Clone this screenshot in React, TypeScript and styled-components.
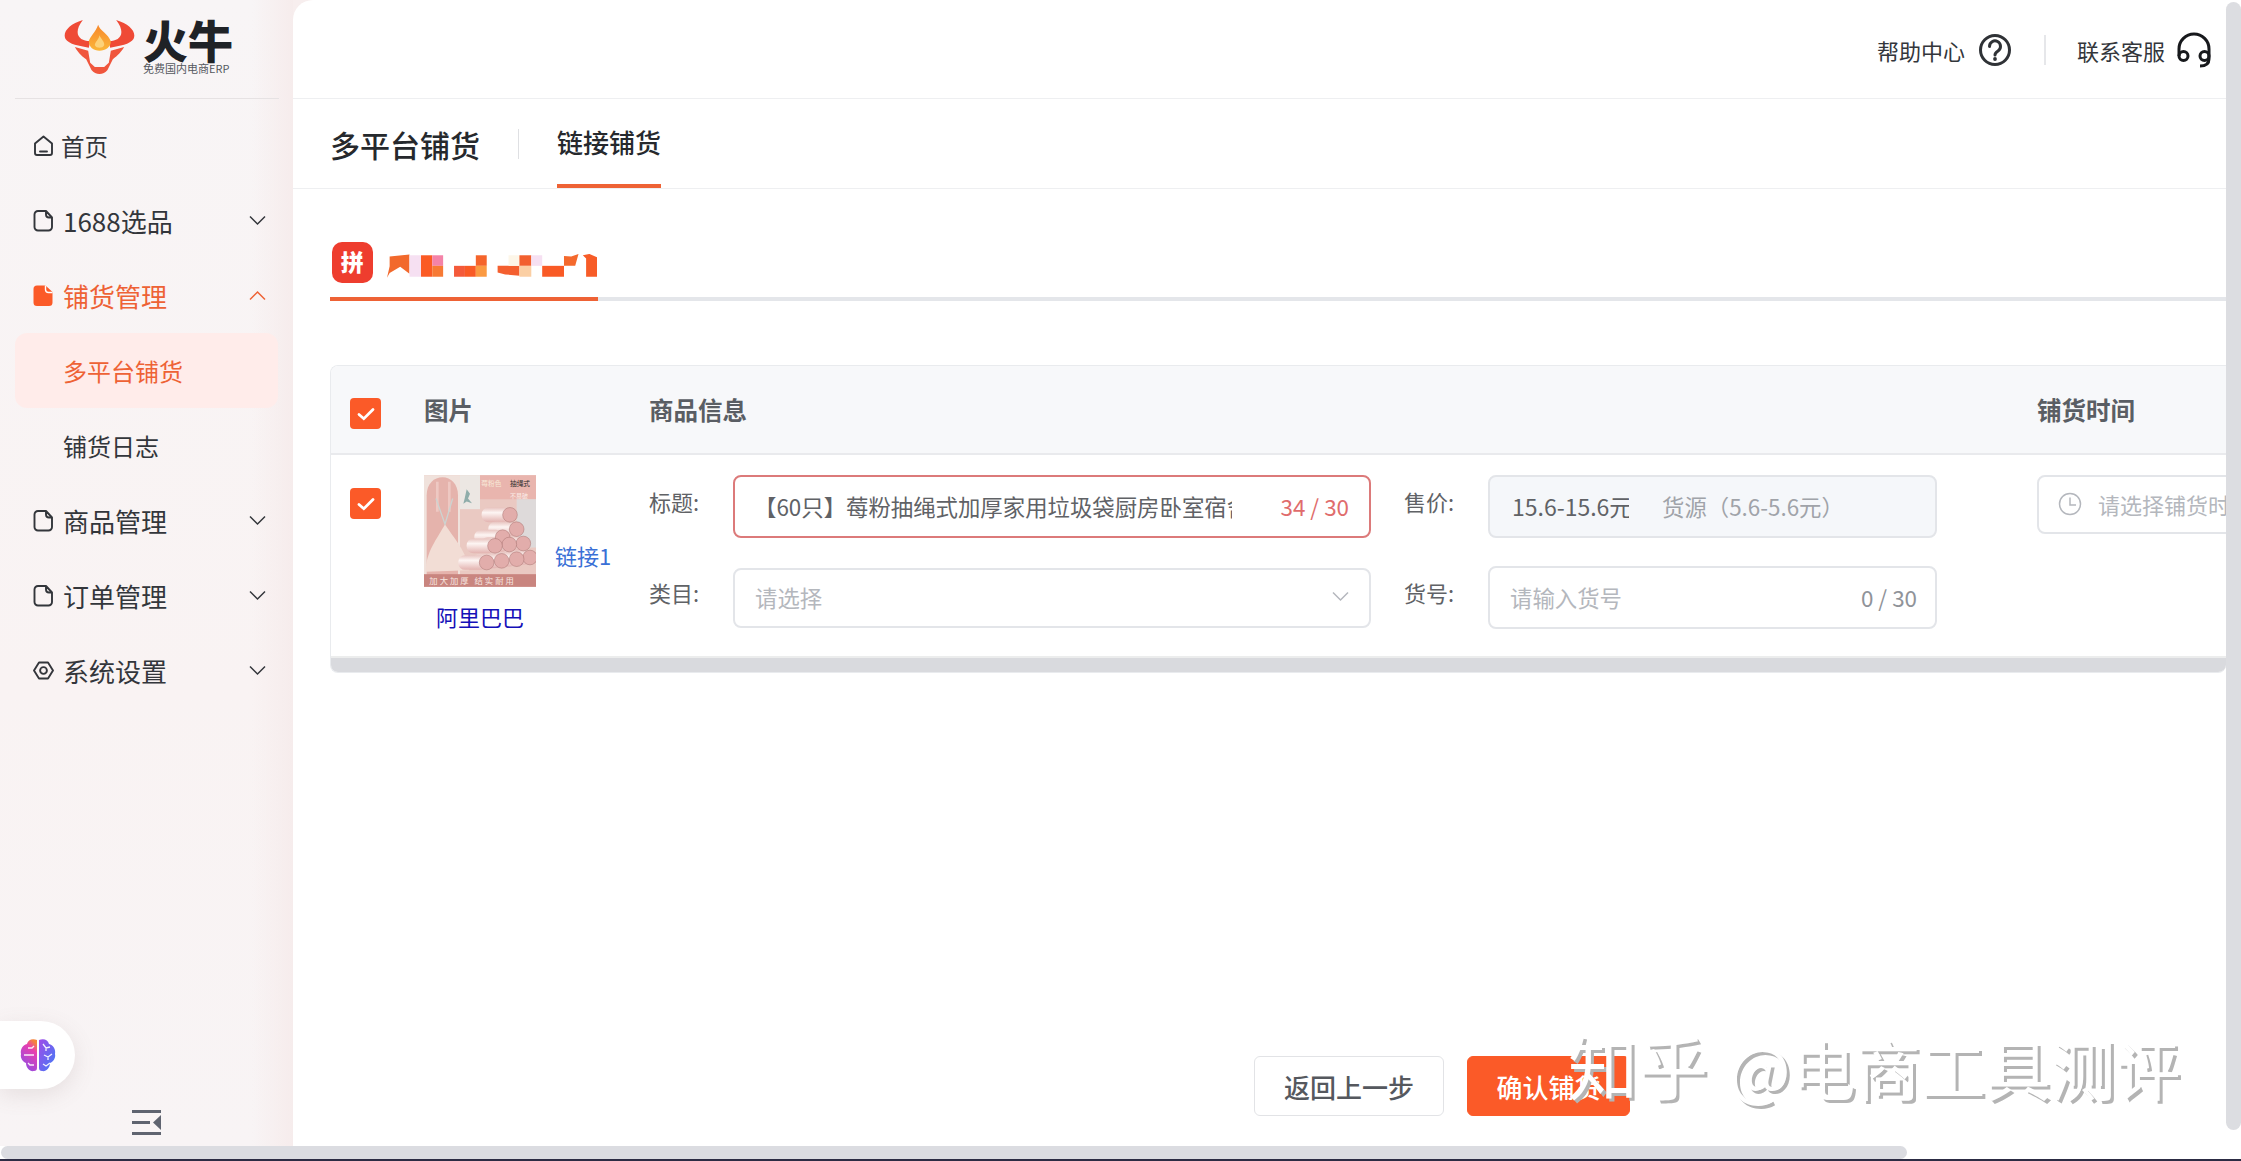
import React from "react"
import styled, { createGlobalStyle } from "styled-components"

const GlobalStyle = createGlobalStyle`
  html, body {
    margin: 0;
    height: 100%;
    overflow: hidden;
    background: #fff;
  }
  body, input {
    font-family: "Noto Sans CJK SC", "Noto Sans", sans-serif;
  }
  #root {
    height: 100%;
  }
`

const Page = styled.div`
  height: 1161px;
  width: 2241px;
  display: flex;
  flex-direction: column;
  position: relative;
  overflow: hidden;
`

const Body = styled.div`
  height: 1146px;
  display: flex;
  background: #f7eeee;
`

const Sidebar = styled.aside`
  width: 293px;
  flex: none;
  display: flex;
  flex-direction: column;
  background:
    linear-gradient(90deg, rgba(246, 236, 236, 0) 86%, #f6ecec 100%),
    linear-gradient(180deg, #f8f5f6 0%, #f9f3f3 60%, #f8f4f5 100%);
`

const Brand = styled.div`
  height: 99px;
  box-sizing: border-box;
  margin: 0 14px 0 15px;
  border-bottom: 1px solid #e6e2e3;
  display: flex;
  align-items: flex-start;
  padding: 19px 0 0 49px;
  gap: 8px;
`

const BrandText = styled.div`
  display: flex;
  flex-direction: column;
  color: #1f2226;
`

const BrandName = styled.div`
  font-size: 45px;
  font-weight: 900;
  line-height: 41px;
  white-space: nowrap;
`

const BrandSlogan = styled.div`
  font-size: 11px;
  line-height: 14px;
  margin-top: 1px;
  color: #54585e;
  white-space: nowrap;
`

const Nav = styled.nav`
  display: flex;
  flex-direction: column;
  padding-top: 9px;
`

const NavItem = styled.div<{ $active?: boolean }>`
  height: 75px;
  display: flex;
  align-items: center;
  padding: 0 27px 0 33px;
  color: ${(p) => (p.$active ? "#ee6235" : "#33363b")};
`

const NavIcon = styled.svg`
  width: 21px;
  height: 23px;
  flex: none;
  margin-right: 9px;
`

const NavLabel = styled.span<{ $small?: boolean }>`
  font-size: ${(p) => (p.$small ? "23.5px" : "26px")};
  line-height: 32px;
  flex: 1;
  white-space: nowrap;
  margin-left: ${(p) => (p.$small ? "-2px" : "0")};
`

const Chevron = styled.svg`
  width: 17px;
  height: 11px;
  flex: none;
`

const SubItem = styled.div<{ $active?: boolean }>`
  height: 75px;
  margin: 0 15px;
  padding-left: 48px;
  display: flex;
  align-items: center;
  font-size: 24px;
  border-radius: 12px;
  color: ${(p) => (p.$active ? "#ee6235" : "#33363b")};
  background: ${(p) => (p.$active ? "#ffecea" : "transparent")};
`

const BrainPill = styled.div`
  margin-top: auto;
  width: 75px;
  height: 68px;
  display: flex;
  align-items: center;
  justify-content: flex-end;
  padding-right: 19px;
  box-sizing: border-box;
  background: #fff;
  border-radius: 0 34px 34px 0;
  box-shadow: 0 6px 22px rgba(120, 100, 100, 0.14);
`

const Collapse = styled.svg`
  width: 30px;
  height: 25px;
  margin: 21px 0 11px 132px;
  flex: none;
`

const Main = styled.main`
  flex: 1;
  min-width: 0;
  display: flex;
  flex-direction: column;
  background: #fff;
  border-radius: 20px 0 0 0;
  overflow: hidden;
`

const TopBar = styled.header`
  height: 97px;
  flex: none;
  padding: 1px 14px 0 0;
  border-bottom: 1px solid #eeeff1;
  display: flex;
  align-items: center;
  justify-content: flex-end;
  color: #33363b;
`

const TopLabel = styled.span`
  font-size: 22px;
  white-space: nowrap;
`

const TopDivider = styled.div`
  width: 2px;
  height: 30px;
  background: #e6e7ea;
  margin: 0 31px 0 32px;
`

const PageTabs = styled.div`
  height: 89px;
  flex: none;
  display: flex;
  align-items: center;
  padding-left: 37px;
  border-bottom: 1px solid #eeeff1;
`

const PageTitle = styled.div`
  font-size: 30px;
  font-weight: 500;
  color: #26292d;
  white-space: nowrap;
`

const TitleDivider = styled.div`
  width: 1px;
  height: 30px;
  background: #dfe0e3;
  margin: 0 38px 0 38px;
`

const PageTab = styled.div`
  height: 89px;
  box-sizing: border-box;
  display: flex;
  align-items: center;
  font-size: 26px;
  font-weight: 500;
  color: #26292d;
  border-bottom: 4px solid #ee6235;
  white-space: nowrap;
`

const PlatformStrip = styled.div`
  flex: none;
  margin: 53px 0 64px 37px;
  height: 59px;
  box-sizing: border-box;
  border-bottom: 4px solid #e4e6ea;
`

const PlatformTab = styled.div`
  width: 268px;
  height: 59px;
  box-sizing: border-box;
  border-bottom: 4px solid #ee6235;
  display: flex;
  padding-left: 2px;
  gap: 14px;
`

const PlatformBadge = styled.div`
  width: 41px;
  height: 41px;
  border-radius: 10px;
  background: #ee3d2e;
  color: #fff;
  font-size: 23px;
  font-weight: 900;
  line-height: 39px;
  text-align: center;
`

const Mosaic = styled.svg`
  width: 213px;
  height: 25px;
  margin-top: 12px;
`

const TableWrap = styled.section`
  flex: none;
  margin-left: 37px;
  border: 1px solid #e9ebee;
  border-right: 0;
  border-radius: 8px 0 8px 8px;
  overflow: hidden;
`

const GridRow = styled.div<{ $head?: boolean }>`
  display: grid;
  grid-template-columns: 93px 225px 1388px 400px;
  height: ${(p) => (p.$head ? "87px" : "201px")};
  background: ${(p) => (p.$head ? "#f7f8fa" : "#fff")};
  border-bottom: ${(p) => (p.$head ? "2px solid #e9eaed" : "0")};
  align-items: ${(p) => (p.$head ? "center" : "start")};
`

const HeadCell = styled.div`
  font-size: 24.5px;
  font-weight: 700;
  color: #5a5e64;
  white-space: nowrap;
`

const CheckCell = styled.div`
  padding-left: 19px;
`

const CheckBox = styled.div<{ $row?: boolean }>`
  width: 31px;
  height: 31px;
  border-radius: 4px;
  background: #fb5a28;
  display: flex;
  align-items: center;
  justify-content: center;
  margin-top: ${(p) => (p.$row ? "33px" : "8px")};
`

const PictureCell = styled.div`
  display: grid;
  grid-template-columns: 112px auto;
  column-gap: 19px;
  padding-top: 20px;
`

const ProductPicture = styled.svg`
  width: 112px;
  height: 112px;
  display: block;
`

const LinkText = styled.a`
  align-self: end;
  font-size: 22px;
  line-height: 30px;
  color: #3a70d6;
  margin-bottom: 17px;
  white-space: nowrap;
`

const SourceText = styled.a`
  font-size: 22px;
  line-height: 30px;
  margin-top: 14px;
  color: #1510b8;
  text-align: center;
`

const InfoCell = styled.div`
  display: grid;
  grid-template-columns: 84px 638px 117px 449px;
  grid-template-rows: 91px 63px;
  padding-top: 20px;
`

const FieldLabel = styled.div<{ $second?: boolean }>`
  font-size: 22px;
  line-height: 30px;
  color: #606266;
  white-space: nowrap;
  padding-left: ${(p) => (p.$second ? "33px" : "0")};
  padding-top: 11px;
`

const Field = styled.div<{ $error?: boolean; $filled?: boolean; $short?: boolean }>`
  height: ${(p) => (p.$short ? "60px" : "63px")};
  align-self: ${(p) => (p.$short ? "center" : "start")};
  box-sizing: border-box;
  border: 2px solid ${(p) => (p.$error ? "#dc7a7a" : "#e3e5e9")};
  border-radius: 8px;
  background: ${(p) => (p.$filled ? "#f5f7fa" : "#fff")};
  display: flex;
  align-items: center;
  padding: 0 20px 2px 20px;
  font-size: 22.4px;
  overflow: hidden;
  white-space: nowrap;
`

const FieldValue = styled.span<{ $width: number; $price?: boolean }>`
  color: #606266;
  overflow: hidden;
  flex: none;
  width: ${(p) => p.$width}px;
  font-size: ${(p) => (p.$price ? "23px" : "inherit")};
  margin-left: ${(p) => (p.$price ? "2px" : "-1px")};
`

const Placeholder = styled.span`
  color: #b4b7bd;
  flex: 1;
`

const Counter = styled.span<{ $error?: boolean }>`
  margin-left: auto;
  margin-right: ${(p) => (p.$error ? "0" : "-2px")};
  color: ${(p) => (p.$error ? "#e06c6c" : "#909399")};
  flex: none;
`

const SourcePrice = styled.span`
  color: #a0a3a9;
  margin-left: 33px;
`

const TimeField = styled.div`
  height: 59px;
  width: 400px;
  margin-top: 20px;
  box-sizing: border-box;
  border: 2px solid #e3e5e9;
  border-radius: 8px;
  display: flex;
  align-items: center;
  padding: 0 0 2px 19px;
  gap: 16px;
  font-size: 22px;
  color: #b4b7bd;
  white-space: nowrap;
`

const TableScroll = styled.div`
  height: 16px;
  background: #d9dade;
  border-top: 2px solid #eceded;
  box-sizing: border-box;
`

const Footer = styled.div`
  margin-top: auto;
  display: flex;
  gap: 23px;
  padding: 0 0 30px 961px;
`

const Button = styled.button<{ $primary?: boolean }>`
  height: 60px;
  width: ${(p) => (p.$primary ? "163px" : "190px")};
  border-radius: 6px;
  border: 1px solid ${(p) => (p.$primary ? "#fb5a28" : "#e2e3e6")};
  background: ${(p) => (p.$primary ? "#fb5a28" : "#fff")};
  color: ${(p) => (p.$primary ? "#fff" : "#55585e")};
  font-family: inherit;
  font-size: 26px;
  font-weight: 500;
  padding: 0;
`

const VScroll = styled.div`
  width: 15px;
  flex: none;
  background: #fff;
  padding-top: 2px;
`

const VThumb = styled.div`
  height: 1128px;
  background: #dcdde1;
  border-radius: 8px;
`

const BottomBar = styled.div`
  height: 15px;
  flex: none;
  background: #fff;
  display: flex;
  flex-direction: column;
`

const HThumb = styled.div`
  width: 1906px;
  height: 13px;
  margin-left: 1px;
  background: #dbdce1;
  border-radius: 7px;
  flex: none;
`

const DarkStrip = styled.div`
  height: 2px;
  background: #2c2c44;
  flex: none;
`

const Watermark = styled.div`
  position: absolute;
  left: 1568px;
  top: 1020px;
  font-size: 65px;
  line-height: 90px;
  white-space: nowrap;
  color: #fff;
  text-shadow: 3px 3px 0 #b4b4b4;
  pointer-events: none;
`

const WatermarkBrand = styled.span`
  font-size: 70px;
  margin-right: 21px;
`

const FileIcon = ({ filled }: { filled?: boolean }) => (
  <NavIcon viewBox="0 0 21 23">
    {filled ? (
      <path
        d="M4 1.5h8.5L19.5 8v10.5a3.5 3.5 0 0 1-3.5 3.5H4a3.5 3.5 0 0 1-3.5-3.5V5A3.5 3.5 0 0 1 4 1.5z"
        fill="#fb5a28"
      />
    ) : (
      <path
        d="M5 2h8l6 6.5V18a3.5 3.5 0 0 1-3.5 3.5H5A3.5 3.5 0 0 1 1.5 18V5.5A3.5 3.5 0 0 1 5 2zM13 2v3.5a3 3 0 0 0 3 3h3"
        fill="none"
        stroke="#33363b"
        strokeWidth="1.9"
        strokeLinejoin="round"
      />
    )}
    {filled && <path d="M12.5 1.5v4a3 3 0 0 0 3 3h4" fill="none" stroke="#fff" strokeWidth="1.4" />}
  </NavIcon>
)

const HomeIcon = () => (
  <NavIcon viewBox="0 0 21 23">
    <path
      d="M10.5 2.5l8.5 7v9.5a2 2 0 0 1-2 2H4a2 2 0 0 1-2-2V9.5zM7 17.5h7"
      fill="none"
      stroke="#33363b"
      strokeWidth="1.9"
      strokeLinejoin="round"
      strokeLinecap="round"
    />
  </NavIcon>
)

const GearIcon = () => (
  <NavIcon viewBox="0 0 21 23">
    <path
      d="M6 3.5h9l5 8-5 8H6l-5-8z"
      fill="none"
      stroke="#33363b"
      strokeWidth="1.9"
      strokeLinejoin="round"
    />
    <circle cx="10.5" cy="11.5" r="3.4" fill="none" stroke="#33363b" strokeWidth="1.9" />
  </NavIcon>
)

const Arrow = ({ up, color }: { up?: boolean; color: string }) => (
  <Chevron viewBox="0 0 17 11">
    <path
      d={up ? "M1 9.5L8.5 2 16 9.5" : "M1 1.5L8.5 9 16 1.5"}
      fill="none"
      stroke={color}
      strokeWidth="1.5"
    />
  </Chevron>
)

const Tick = () => (
  <svg width="18" height="14" viewBox="0 0 18 14">
    <path d="M2 7.5l4.8 4.2L16 2.5" fill="none" stroke="#fff" strokeWidth="2.8" strokeLinecap="round" />
  </svg>
)

const Logo = () => (
  <svg width="71" height="56" viewBox="190 55 212 168">
    <defs>
      <linearGradient id="flame" x1="0" y1="0" x2="0" y2="1">
        <stop offset="0" stopColor="#f7872b" />
        <stop offset="1" stopColor="#fbb63a" />
      </linearGradient>
    </defs>
    <path
      d="M246 58C205 70 184 95 194 115C204 131 236 136 264 141L268 121C240 122 212 102 246 58Z"
      fill="#ef4a36"
    />
    <path
      d="M346 58C387 70 408 95 398 115C388 131 356 136 328 141L324 121C352 122 380 102 346 58Z"
      fill="#ef4a36"
    />
    <path
      d="M222 139L262 150L268 186L282 199H310L324 186L330 150L370 139C358 160 342 170 336 176L320 208C308 224 284 224 272 208L256 176C248 170 234 160 222 139Z"
      fill="#f0563d"
    />
    <path
      d="M292 72C296 90 322 98 330 122C330 140 314 150 296 150C278 150 264 140 264 122C266 108 284 96 292 72Z"
      fill="url(#flame)"
    />
    <path d="M296 104C302 118 312 124 310 134C306 144 286 144 282 134C282 124 294 118 296 104Z" fill="#fcd27a" />
  </svg>
)

const HelpIcon = () => (
  <svg width="34" height="34" viewBox="0 0 34 34" style={{ marginLeft: 13 }}>
    <circle cx="17" cy="17" r="14.5" fill="none" stroke="#2f3236" strokeWidth="3" />
    <path
      d="M11.5 13.5a5.5 5.5 0 1 1 8.5 4.5c-2 1.3-3 2-3 4"
      fill="none"
      stroke="#2f3236"
      strokeWidth="3"
      strokeLinecap="round"
    />
    <circle cx="17" cy="26" r="1.9" fill="#2f3236" />
  </svg>
)

const HeadsetIcon = () => (
  <svg width="36" height="38" viewBox="0 0 36 38" style={{ marginLeft: 11 }}>
    <path d="M3 25V18a15 15 0 0 1 30 0v10c0 5-4 7-9 7" fill="none" stroke="#17191c" strokeWidth="3" />
    <circle cx="7.5" cy="25" r="4.5" fill="none" stroke="#17191c" strokeWidth="3" />
    <circle cx="28.5" cy="25" r="4.5" fill="none" stroke="#17191c" strokeWidth="3" />
  </svg>
)

const BrainIcon = () => (
  <svg width="36" height="35" viewBox="0 0 36 35">
    <defs>
      <linearGradient id="brainL" x1="0.7" y1="0" x2="0.2" y2="1">
        <stop offset="0" stopColor="#f5853a" />
        <stop offset="0.25" stopColor="#e83fb0" />
        <stop offset="1" stopColor="#8a4fe8" />
      </linearGradient>
      <linearGradient id="brainR" x1="0" y1="0" x2="1" y2="1">
        <stop offset="0" stopColor="#a04ce8" />
        <stop offset="1" stopColor="#3f7cf7" />
      </linearGradient>
    </defs>
    <path
      d="M17 2C12 0 8 2 7 6C3 7 0 11 1 16C0 20 3 24 6 25C6 30 10 34 14 33C16 33 17 32 17 30Z"
      fill="url(#brainL)"
    />
    <path
      d="M19 2C24 0 28 2 29 6C33 7 36 11 35 16C36 20 33 24 30 25C30 30 26 34 22 33C20 33 19 32 19 30Z"
      fill="url(#brainR)"
    />
    <path
      d="M4 17H14M8 10H12L14 8M14 27L10 27L8 25M23 6L26 10L30 9M26 10V13M24 17L28 19L32 16M28 19V22M23 26L26 28L30 25"
      fill="none"
      stroke="#fff"
      strokeWidth="1.3"
      opacity="0.9"
    />
  </svg>
)

const CollapseIcon = () => (
  <Collapse viewBox="0 0 30 25">
    <path d="M0 1.5h29M0 12.5h18M0 23.5h29" stroke="#5f6470" strokeWidth="3" fill="none" />
    <path d="M29 5v15l-8-7.5z" fill="#5f6470" />
  </Collapse>
)

const ClockIcon = () => (
  <svg width="24" height="24" viewBox="0 0 24 24">
    <circle cx="12" cy="12" r="10.5" fill="none" stroke="#b4b7bd" strokeWidth="1.5" />
    <path d="M12 5.5V13h6" fill="none" stroke="#b4b7bd" strokeWidth="1.5" />
  </svg>
)

// pixelated shop name
const MosaicArt = () => (
  <Mosaic viewBox="262 170 640 72">
    <path d="M262 240L270 205V176L330 170V228L302 207L270 226Z" fill="#f2692c" />
    <rect x="330" y="172" width="35" height="65" fill="#f6e0f2" />
    <rect x="365" y="172" width="34" height="65" fill="#fb5a24" />
    <rect x="399" y="172" width="33" height="32" fill="#f483a8" />
    <rect x="399" y="204" width="33" height="33" fill="#f77a35" />
    <rect x="465" y="204" width="33" height="33" fill="#f45a3a" />
    <rect x="498" y="204" width="33" height="33" fill="#f95a25" />
    <rect x="531" y="172" width="33" height="32" fill="#f5642b" />
    <rect x="531" y="204" width="33" height="33" fill="#fb9a42" />
    <path d="M597 204H663V234L620 230L597 224Z" fill="#f45f2f" />
    <rect x="630" y="172" width="33" height="32" fill="#fdf6e8" />
    <rect x="663" y="172" width="36" height="32" fill="#f2602f" />
    <rect x="663" y="204" width="36" height="33" fill="#fbcfa4" />
    <rect x="699" y="172" width="33" height="32" fill="#f6e0f2" />
    <rect x="732" y="204" width="66" height="33" fill="#f95a25" />
    <path d="M798 174L820 176L842 168L832 204H798Z" fill="#f4692d" />
    <path d="M855 172L875 168L898 178V237H865V182Z" fill="#f75c28" />
  </Mosaic>
)

const rollEnds: [number, number][] = [
  [258, 119],
  [278, 162],
  [236, 186],
  [298, 205],
  [256, 208],
  [213, 212],
  [318, 247],
  [278, 252],
  [233, 257],
  [188, 262],
]

const ProductArt = () => (
  <ProductPicture viewBox="0 0 336 335">
    <defs>
      <linearGradient id="tube" x1="0" y1="0" x2="0" y2="1">
        <stop offset="0" stopColor="#e8c4c0" />
        <stop offset="0.35" stopColor="#fdf5f3" />
        <stop offset="1" stopColor="#e3b3b0" />
      </linearGradient>
    </defs>
    <rect width="336" height="335" fill="#eac9c2" />
    <rect x="108" y="0" width="60" height="102" fill="#ece7e3" />
    <path d="M128 42l10 14-6 14 12 14-16-5-10 7 4-16z" fill="#8fadaa" />
    <path d="M168 0h168v72H168z" fill="#e9b5ae" />
    <path d="M278 72h58v145h-58z" fill="#dedada" />
    <path d="M0 0h108v300H0z" fill="#f0e2dc" />
    <path d="M8 300V60C8 25 30 6 56 6c24 0 46 20 46 54v240z" fill="#e5b3ac" />
    <path d="M36 20h8v90h-8zM72 20h8v90h-8z" fill="#eec8c2" />
    <path d="M63 147C40 190 5 230 5 290L135 285C130 230 90 190 63 147Z" fill="#f2ddd5" />
    <path d="M36 70L63 147L86 70" stroke="#ccd3d0" strokeWidth="4" fill="none" />
    {rollEnds.map(([x, y]) => (
      <rect key={`t${x}`} x={x - 85} y={y - 22} width="85" height="44" rx="20" fill="url(#tube)" />
    ))}
    {rollEnds.map(([x, y]) => (
      <circle key={`c${x}`} cx={x} cy={y} r="22" fill="#e2adab" stroke="#a97270" strokeWidth="1.5" />
    ))}
    <rect x="0" y="297" width="336" height="38" fill="#c9857f" />
    <text x="16" y="326" fontSize="25" fill="#f7e5e0" letterSpacing="6">
      加大加厚 结实耐用
    </text>
    <text x="172" y="32" fontSize="20" fill="#f8e9d8">
      莓粉色
    </text>
    <text x="258" y="32" fontSize="20" fill="#2a2a2a">
      抽绳式
    </text>
    <text x="258" y="70" fontSize="18" fill="#fbeee8">
      不易破
    </text>
  </ProductPicture>
)

interface MenuEntry {
  label: string
  icon: React.ReactNode
}

const lowerMenu: MenuEntry[] = [
  { label: "商品管理", icon: <FileIcon /> },
  { label: "订单管理", icon: <FileIcon /> },
  { label: "系统设置", icon: <GearIcon /> },
]

const App: React.FunctionComponent = () => {
  return (
    <Page>
      <GlobalStyle />
      <Body>
        <Sidebar>
          <Brand>
            <Logo />
            <BrandText>
              <BrandName>火牛</BrandName>
              <BrandSlogan>免费国内电商ERP</BrandSlogan>
            </BrandText>
          </Brand>
          <Nav>
            <NavItem>
              <HomeIcon />
              <NavLabel $small>首页</NavLabel>
            </NavItem>
            <NavItem>
              <FileIcon />
              <NavLabel>1688选品</NavLabel>
              <Arrow color="#33363b" />
            </NavItem>
            <NavItem $active>
              <FileIcon filled />
              <NavLabel>铺货管理</NavLabel>
              <Arrow up color="#ee6235" />
            </NavItem>
            <SubItem $active>多平台铺货</SubItem>
            <SubItem>铺货日志</SubItem>
            {lowerMenu.map((entry) => (
              <NavItem key={entry.label}>
                {entry.icon}
                <NavLabel>{entry.label}</NavLabel>
                <Arrow color="#33363b" />
              </NavItem>
            ))}
          </Nav>
          <BrainPill>
            <BrainIcon />
          </BrainPill>
          <CollapseIcon />
        </Sidebar>

        <Main>
          <TopBar>
            <TopLabel>帮助中心</TopLabel>
            <HelpIcon />
            <TopDivider />
            <TopLabel>联系客服</TopLabel>
            <HeadsetIcon />
          </TopBar>

          <PageTabs>
            <PageTitle>多平台铺货</PageTitle>
            <TitleDivider />
            <PageTab>链接铺货</PageTab>
          </PageTabs>

          <PlatformStrip>
            <PlatformTab>
              <PlatformBadge>拼</PlatformBadge>
              <MosaicArt />
            </PlatformTab>
          </PlatformStrip>

          <TableWrap>
            <GridRow $head>
              <CheckCell>
                <CheckBox>
                  <Tick />
                </CheckBox>
              </CheckCell>
              <HeadCell>图片</HeadCell>
              <HeadCell>商品信息</HeadCell>
              <HeadCell>铺货时间</HeadCell>
            </GridRow>
            <GridRow>
              <CheckCell>
                <CheckBox $row>
                  <Tick />
                </CheckBox>
              </CheckCell>
              <PictureCell>
                <ProductArt />
                <LinkText>链接1</LinkText>
                <SourceText>阿里巴巴</SourceText>
              </PictureCell>
              <InfoCell>
                <FieldLabel>标题:</FieldLabel>
                <Field $error>
                  <FieldValue $width={478}>【60只】莓粉抽绳式加厚家用垃圾袋厨房卧室宿舍</FieldValue>
                  <Counter $error>34 / 30</Counter>
                </Field>
                <FieldLabel $second>售价:</FieldLabel>
                <Field $filled>
                  <FieldValue $price $width={117}>15.6-15.6元</FieldValue>
                  <SourcePrice>货源（5.6-5.6元）</SourcePrice>
                </Field>
                <FieldLabel>类目:</FieldLabel>
                <Field $short>
                  <Placeholder>请选择</Placeholder>
                  <Arrow color="#b4b7bd" />
                </Field>
                <FieldLabel $second>货号:</FieldLabel>
                <Field>
                  <Placeholder>请输入货号</Placeholder>
                  <Counter>0 / 30</Counter>
                </Field>
              </InfoCell>
              <TimeField>
                <ClockIcon />
                请选择铺货时间
              </TimeField>
            </GridRow>
            <TableScroll />
          </TableWrap>

          <Footer>
            <Button>返回上一步</Button>
            <Button $primary>确认铺货</Button>
          </Footer>
        </Main>

        <VScroll>
          <VThumb />
        </VScroll>
      </Body>
      <BottomBar>
        <HThumb />
        <DarkStrip />
      </BottomBar>
      <Watermark>
        <WatermarkBrand>知乎</WatermarkBrand>@电商工具测评
      </Watermark>
    </Page>
  )
}

export default App
